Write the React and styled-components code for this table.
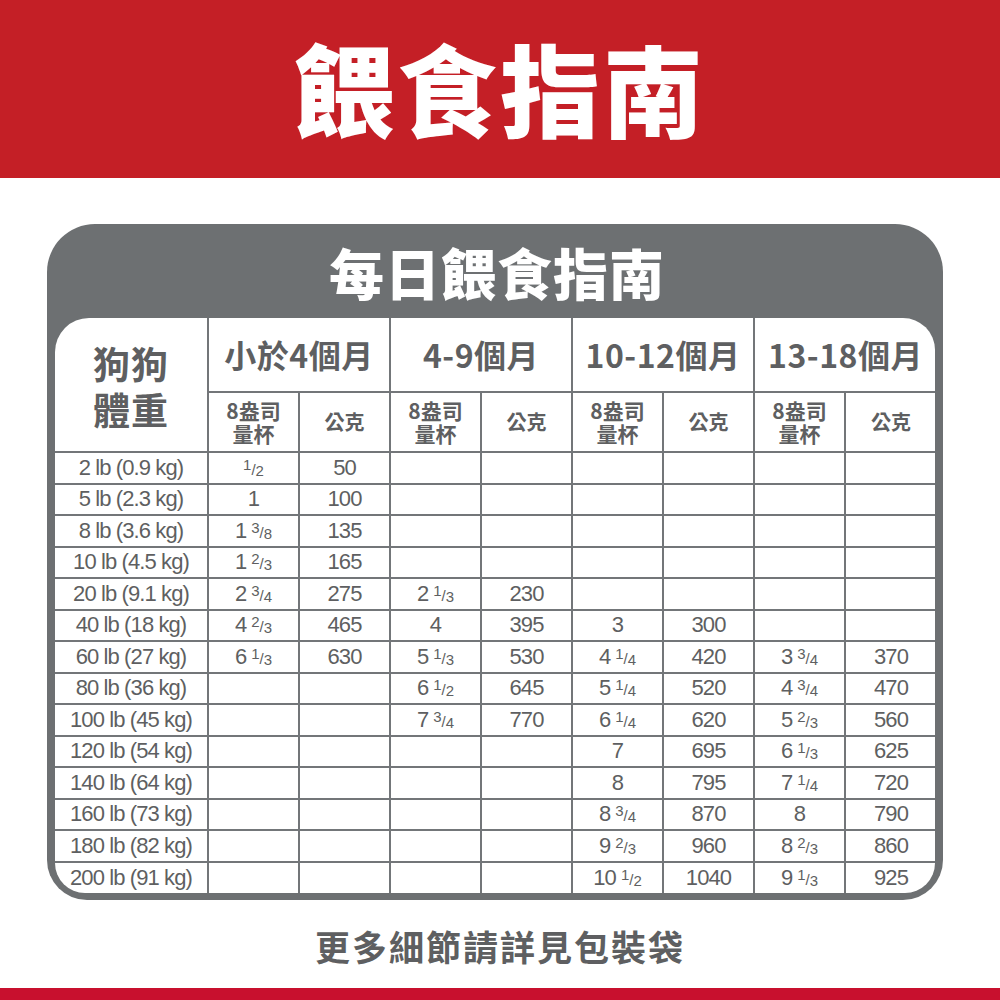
import React from "react";
import styled, { createGlobalStyle } from "styled-components";

const GlobalStyle = createGlobalStyle`
  html, body {
    margin: 0;
    padding: 0;
    background: #fff;
  }
  body {
    font-family: "Noto Sans CJK TC", "Noto Sans", sans-serif;
  }
`;

const RED = "#c41f26";
const GRAY = "#6d7072";
const LINE = "#737679";
const TEXT = "#5e5f61";

const Page = styled.div`
  width: 1000px;
  height: 1000px;
  display: flex;
  flex-direction: column;
  overflow: hidden;
  background: #fff;
`;

const Banner = styled.header`
  height: 178px;
  background: ${RED};
  display: flex;
  align-items: center;
  justify-content: center;
`;

const BannerTitle = styled.h1`
  margin: 0 0 4px 0;
  color: #fff;
  font-family: "Noto Sans CJK TC", sans-serif;
  font-weight: 900;
  font-size: 100px;
  letter-spacing: 3px;
  line-height: 1;
`;

const Card = styled.section`
  margin: 46px 0 0 47px;
  width: 896px;
  background: ${GRAY};
  border-radius: 48px 48px 40px 40px;
  padding: 0 8px 7px 8px;
  box-sizing: border-box;
`;

const CardTitle = styled.h2`
  margin: 0;
  height: 94px;
  display: flex;
  align-items: center;
  justify-content: center;
  color: #fff;
  font-weight: 900;
  font-size: 55px;
  letter-spacing: 1px;
  padding-left: 4px;
`;

const TableWrap = styled.div`
  background: #fff;
  border-radius: 34px 32px 30px 30px;
  overflow: hidden;
`;

const Table = styled.table`
  width: 880px;
  table-layout: fixed;
  border-collapse: collapse;
  border-style: hidden;
  color: ${TEXT};
`;

const HeadCell = styled.th`
  border: 2px solid ${LINE};
  padding: 0;
  text-align: center;
  font-family: "Noto Sans CJK TC", sans-serif;
  font-weight: 700;
  color: ${TEXT};
  font-size: ${(p) => p.$size || 18}px;
  line-height: ${(p) => p.$lh || 1.2};
  letter-spacing: ${(p) => p.$ls || 0}px;
`;

const WeightHead = styled(HeadCell)`
  font-size: 37px;
  line-height: 1.22;
  padding-top: 4px;
  letter-spacing: 1px;
`;

const CupLabel = styled.span`
  display: block;
  font-size: 21px;
  line-height: 23px;
`;

const Cell = styled.td`
  border: 2px solid ${LINE};
  padding: 0;
  text-align: center;
  font-family: "Liberation Sans", Arial, sans-serif;
  font-size: 22px;
  letter-spacing: -0.9px;
  line-height: 1;
  white-space: nowrap;
  color: ${TEXT};
`;

const Row = styled.tr`
  height: ${(p) => p.$h}px;
`;

const Frac = styled.span`
  font-size: 15px;
  letter-spacing: 0;
  margin-left: ${(p) => (p.$whole ? 5 : 0)}px;
  sup {
    font-size: 15px;
    vertical-align: 5px;
  }
  sub {
    font-size: 15px;
    vertical-align: -1px;
  }
`;

const Footer = styled.footer`
  height: 88px;
  display: flex;
  align-items: center;
  justify-content: center;
`;

const FooterText = styled.p`
  margin: 2px 0 0 0;
  font-weight: 700;
  font-size: 35px;
  letter-spacing: 2px;
  color: ${TEXT};
`;

const BottomBar = styled.div`
  flex: 1;
  background: #c8102e;
`;

const ages = ["小於4個月", "4-9個月", "10-12個月", "13-18個月"];

const rows = [
  ["2 lb (0.9 kg)", "1/2", "50"],
  ["5 lb (2.3 kg)", "1", "100"],
  ["8 lb (3.6 kg)", "1 3/8", "135"],
  ["10 lb (4.5 kg)", "1 2/3", "165"],
  ["20 lb (9.1 kg)", "2 3/4", "275", "2 1/3", "230"],
  ["40 lb (18 kg)", "4 2/3", "465", "4", "395", "3", "300"],
  ["60 lb (27 kg)", "6 1/3", "630", "5 1/3", "530", "4 1/4", "420", "3 3/4", "370"],
  ["80 lb (36 kg)", "", "", "6 1/2", "645", "5 1/4", "520", "4 3/4", "470"],
  ["100 lb (45 kg)", "", "", "7 3/4", "770", "6 1/4", "620", "5 2/3", "560"],
  ["120 lb (54 kg)", "", "", "", "", "7", "695", "6 1/3", "625"],
  ["140 lb (64 kg)", "", "", "", "", "8", "795", "7 1/4", "720"],
  ["160 lb (73 kg)", "", "", "", "", "8 3/4", "870", "8", "790"],
  ["180 lb (82 kg)", "", "", "", "", "9 2/3", "960", "8 2/3", "860"],
  ["200 lb (91 kg)", "", "", "", "", "10 1/2", "1040", "9 1/3", "925"],
];

const Amount = ({ value }) => {
  if (!value || !value.includes("/")) return value || null;
  const parts = value.split(" ");
  const frac = parts[parts.length - 1].split("/");
  const whole = parts.length > 1 ? parts[0] : null;
  return (
    <>
      {whole}
      <Frac $whole={!!whole}>
        <sup>{frac[0]}</sup>/<sub>{frac[1]}</sub>
      </Frac>
    </>
  );
};

export default function App() {
  return (
    <Page>
      <GlobalStyle />
      <Banner>
        <BannerTitle>餵食指南</BannerTitle>
      </Banner>
      <Card>
        <CardTitle>每日餵食指南</CardTitle>
        <TableWrap>
          <Table>
            <colgroup>
              <col style={{ width: 153 }} />
              {Array.from({ length: 8 }).map((_, i) => (
                <col key={i} style={{ width: 91 }} />
              ))}
            </colgroup>
            <thead>
              <Row $h={74}>
                <WeightHead rowSpan={2}>
                  狗狗
                  <br />
                  體重
                </WeightHead>
                {ages.map((a) => (
                  <HeadCell key={a} colSpan={2} $size={32} $ls={0.5}>
                    {a}
                  </HeadCell>
                ))}
              </Row>
              <Row $h={60}>
                {ages.map((a) => (
                  <React.Fragment key={a}>
                    <HeadCell>
                      <CupLabel>8盎司</CupLabel>
                      <CupLabel>量杯</CupLabel>
                    </HeadCell>
                    <HeadCell $size={20}>公克</HeadCell>
                  </React.Fragment>
                ))}
              </Row>
            </thead>
            <tbody>
              {rows.map((r) => (
                <Row key={r[0]} $h={31.5}>
                  <Cell>{r[0]}</Cell>
                  {Array.from({ length: 8 }).map((_, i) => (
                    <Cell key={i}>
                      <Amount value={r[i + 1]} />
                    </Cell>
                  ))}
                </Row>
              ))}
            </tbody>
          </Table>
        </TableWrap>
      </Card>
      <Footer>
        <FooterText>更多細節請詳見包裝袋</FooterText>
      </Footer>
      <BottomBar />
    </Page>
  );
}
